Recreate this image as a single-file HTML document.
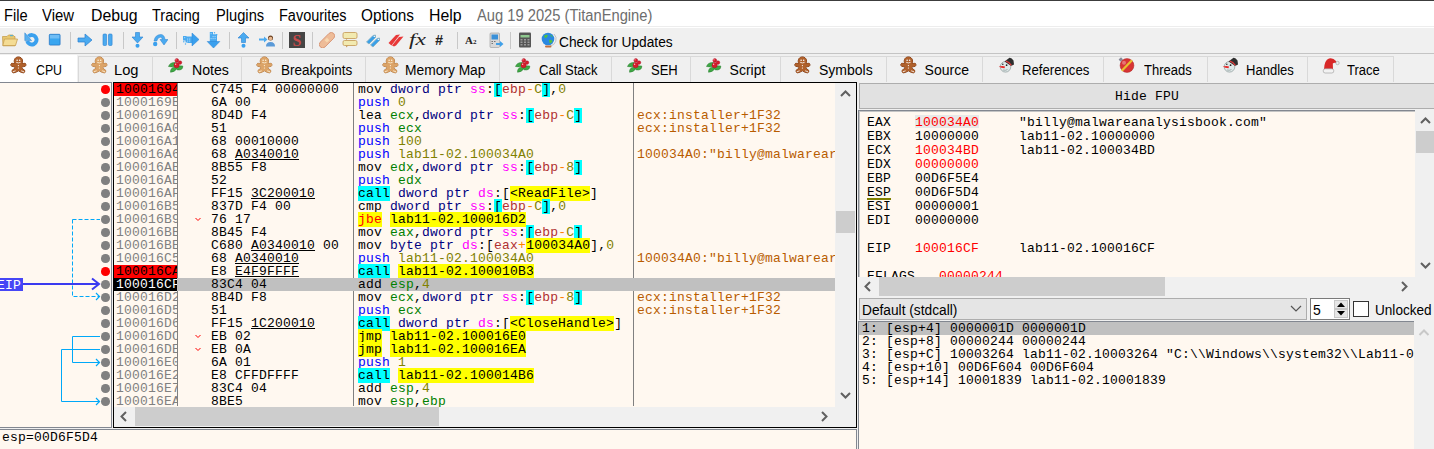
<!DOCTYPE html>
<html><head><meta charset="utf-8">
<style>
*{margin:0;padding:0;box-sizing:border-box}
html,body{width:1434px;height:449px;overflow:hidden;background:#f0f0f0;font-family:"Liberation Sans",sans-serif;position:relative}
.a{position:absolute}
.mi{position:absolute;top:6.5px;font-size:16px;line-height:18px;color:#000;white-space:nowrap}
.sep{position:absolute;top:32px;width:1px;height:17px;background:#c8c8c8}
.tt{font-size:14px;line-height:16px;color:#000;white-space:nowrap}
.m{font-family:"Liberation Mono",monospace;font-size:13px;letter-spacing:0.2px;white-space:pre;line-height:14px;color:#000}
.addr{position:absolute;left:114px;width:63px;height:13px;line-height:13px;padding-left:2px;color:#808080;overflow:hidden;font-family:"Liberation Mono",monospace;font-size:13px;letter-spacing:0.2px;white-space:pre}
.abp{background:#ff0000;color:#000}
.aeip{background:#000;color:#fff}
.rowsel{position:absolute;left:177px;width:658px;height:13px;background:#c0c0c0}
.dot{position:absolute;left:101px;width:8.5px;height:8.5px;border-radius:50%;background:#808080}
.dot.red{background:#ff0000}
.byt,.dis,.com{position:absolute;height:13px;line-height:13px;font-family:"Liberation Mono",monospace;font-size:13px;letter-spacing:0.2px;white-space:pre;color:#000}
.byt{left:211px}
.byt u{text-decoration:underline}
.dis{left:358px}
.com{left:637px;color:#b85c00;width:198px;overflow:hidden}
.jm{position:absolute;left:194px;height:13px;line-height:13px;font-size:11px;color:#ff0000}
.op{color:#ff8000}.mn{color:#000}.sz{color:#000080}.seg{color:#ff00ff}.br{background:#00ffff;color:#000}.reg{color:#b03030}.num{color:#808000}
.push{color:#0000ff}.reg2{color:#008000}.call{background:#00ffff;color:#000}.api{background:#ffff00;color:#000}
.jcc{background:#ffff00;color:#ff0000}.tgt{background:#ffff00;color:#000}.tgtn{background:#ffff00;color:#000}.jmp{background:#ffff00;color:#000}
.colsep{position:absolute;top:83px;width:1px;height:323px;background:#808080}
.chev{position:absolute}
</style></head><body>
<!-- menubar -->
<div class="a" style="left:0;top:0;width:1434px;height:28px;background:#fff;border-top:1px solid #3c3c3c"></div>
<span class="mi" style="left:4.0px;transform:scaleX(0.915);transform-origin:0 0">File</span>
<span class="mi" style="left:42.4px;transform:scaleX(0.93);transform-origin:0 0">View</span>
<span class="mi" style="left:90.9px;transform:scaleX(0.99);transform-origin:0 0">Debug</span>
<span class="mi" style="left:151.7px;transform:scaleX(0.905);transform-origin:0 0">Tracing</span>
<span class="mi" style="left:215.8px;transform:scaleX(0.917);transform-origin:0 0">Plugins</span>
<span class="mi" style="left:278.8px;transform:scaleX(0.905);transform-origin:0 0">Favourites</span>
<span class="mi" style="left:360.5px;transform:scaleX(0.96);transform-origin:0 0">Options</span>
<span class="mi" style="left:429.1px;transform:scaleX(0.99);transform-origin:0 0">Help</span>
<span class="mi" style="left:476.8px;transform:scaleX(0.92);transform-origin:0 0;color:#6d6d6d">Aug 19 2025 (TitanEngine)</span>
<div class="a" style="left:0;top:26px;width:1434px;height:1px;background:#ededed"></div>
<!-- toolbar -->
<div class="a" style="left:0;top:28px;width:1434px;height:26px;background:#f0f0f0;border-bottom:1px solid #c4c4c4"></div>
<svg class="a" style="left:2px;top:32px" width="16" height="16" viewBox="0 0 16 16"><path d="M0.5 4.5 L5 4.5 L6.5 3 L11 3 L12 4.5 L13 4.5 L13 13.8 L1 13.8Z" fill="#e8c870" stroke="#c8a050" stroke-width=".8"/><path d="M2.5 7 L15.5 7 L13.5 13.5 L0.8 13.5Z" fill="#f4dc94" stroke="#c8a050" stroke-width=".8"/><rect x="8" y="3" width="3" height="1.2" fill="#5ab0d0"/></svg>
<svg class="a" style="left:24px;top:32px" width="16" height="16" viewBox="0 0 16 16"><path d="M4.44 4.44 A4.75 4.75 0 1 1 3.2 9.0" fill="none" stroke="#3aa0ee" stroke-width="3.9"/><path d="M0.8 0.8 L0.8 8.6 L7.6 8.6Z" fill="#56b0f0" stroke="#2a80d0" stroke-width=".5"/></svg>
<svg class="a" style="left:47px;top:32px" width="16" height="16" viewBox="0 0 16 16"><rect x="2.3" y="2.3" width="10.8" height="10.8" rx=".8" fill="#3aa6f0" stroke="#2070c0" stroke-width=".7"/><rect x="3" y="3" width="9.4" height="3.5" fill="#86c8f6" opacity=".7"/></svg>
<svg class="a" style="left:77px;top:32px" width="16" height="16" viewBox="0 0 16 16"><path d="M1 6 L8 6 L8 2 L15 8 L8 14 L8 10 L1 10Z" fill="#4aaaf0" stroke="#2a80d0" stroke-width=".7"/></svg>
<svg class="a" style="left:100px;top:32px" width="16" height="16" viewBox="0 0 16 16"><rect x="3" y="2" width="3.6" height="11.5" rx="1" fill="#4aaaf0" stroke="#2a80d0" stroke-width=".6"/><rect x="8.5" y="2" width="3.6" height="11.5" rx="1" fill="#4aaaf0" stroke="#2a80d0" stroke-width=".6"/></svg>
<svg class="a" style="left:130px;top:32px" width="16" height="16" viewBox="0 0 16 16"><path d="M5.5 0.5 L9.5 0.5 L9.5 5 L13 5 L7.5 11 L2 5 L5.5 5Z" fill="#4aaaf0" stroke="#2a80d0" stroke-width=".6"/><circle cx="7.5" cy="13.8" r="2" fill="#3aa0ee"/></svg>
<svg class="a" style="left:152px;top:32px" width="16" height="16" viewBox="0 0 16 16"><path d="M2 9 Q3 2.5 9 2.5 Q12.5 2.8 13 7.5 L16 7.5 L12 13 L8 7.5 L10.3 7.5 Q10 5.2 8.5 5.2 Q5.5 5.3 4.8 9Z" fill="#4aaaf0" stroke="#2a80d0" stroke-width=".5"/><circle cx="3.2" cy="12" r="2.2" fill="#3aa0ee"/></svg>
<svg class="a" style="left:183px;top:32px" width="16" height="16" viewBox="0 0 16 16"><path d="M0 4 L3.5 4 L3.5 4.5 L9.5 4.5 L9.5 11 L4.5 11 L4.5 10.5 L2.5 10.5 L2.5 8.5 L0 8.5Z" fill="#4aaaf0"/><path d="M9 1 L16 7.5 L9 14Z" fill="#3aa0ee" stroke="#2a80d0" stroke-width=".5"/><g fill="#9ad0f8"><rect x="1" y="5" width="1.2" height="1.2"/><rect x="4" y="6.5" width="1.2" height="1.2"/><rect x="6" y="6.5" width="1.2" height="1.2"/><rect x="4" y="8.5" width="1.2" height="1.2"/><rect x="6" y="8.5" width="1.2" height="1.2"/></g><circle cx="0.8" cy="9.8" r=".7" fill="#4aaaf0"/><circle cx="2.5" cy="12" r=".7" fill="#4aaaf0"/></svg>
<svg class="a" style="left:206px;top:32px" width="16" height="16" viewBox="0 0 16 16"><path d="M3.8 0 L7 0 L7 2.2 L11 2.2 L11 10 L3.8 10Z" fill="#4aaaf0"/><path d="M1.2 9.5 L13.8 9.5 L7.5 16Z" fill="#3aa0ee" stroke="#2a80d0" stroke-width=".5"/><g fill="#9ad0f8"><rect x="4.5" y="1" width="1.2" height="1.2"/><rect x="6.5" y="4" width="1.2" height="1.2"/><rect x="8.5" y="4" width="1.2" height="1.2"/><rect x="4.5" y="6" width="1.2" height="1.2"/><rect x="6.5" y="6" width="1.2" height="1.2"/><rect x="8.5" y="6" width="1.2" height="1.2"/></g><circle cx="8.5" cy="0.8" r=".7" fill="#4aaaf0"/><circle cx="10.8" cy="2.8" r=".7" fill="#4aaaf0"/></svg>
<svg class="a" style="left:236px;top:32px" width="16" height="16" viewBox="0 0 16 16"><path d="M7.5 0.5 L13 6 L9.5 6 L9.5 10.5 L5.5 10.5 L5.5 6 L2 6Z" fill="#4aaaf0" stroke="#2a80d0" stroke-width=".6"/><circle cx="7.5" cy="13.8" r="2" fill="#3aa0ee"/></svg>
<svg class="a" style="left:259px;top:32px" width="16" height="16" viewBox="0 0 16 16"><path d="M0 6.5 L5 6.5 L5 4.5 L8.5 7.5 L5 10.5 L5 8.5 L0 8.5Z" fill="#4aaaf0"/><circle cx="11.5" cy="6" r="2.5" fill="#6a4020"/><circle cx="11.5" cy="6.5" r="1.8" fill="#e8b890"/><path d="M7 14.5 Q7 10 11.5 10 Q16 10 16 14.5Z" fill="#5a9ad8"/></svg>
<svg class="a" style="left:289px;top:32px" width="16" height="16" viewBox="0 0 16 16"><rect x="0" y="0" width="16" height="16" fill="#454545"/><text x="8" y="13.5" text-anchor="middle" font-family="Liberation Serif" font-weight="bold" font-size="16" fill="#c84a4a">S</text></svg>
<svg class="a" style="left:319px;top:32px" width="16" height="16" viewBox="0 0 16 16"><rect x="-1.5" y="4.8" width="19" height="6.8" rx="3.4" fill="#eebc98" stroke="#d49070" stroke-width=".8" transform="rotate(-45 8 8.2)"/><rect x="6.3" y="6.5" width="3.4" height="3.4" fill="#f8d8b0" transform="rotate(-45 8 8.2)"/></svg>
<svg class="a" style="left:342px;top:32px" width="16" height="16" viewBox="0 0 16 16"><rect x="1" y="0.5" width="14" height="6" rx="1.5" fill="#f2eab0" stroke="#c8a060" stroke-width=".9"/><path d="M4 6.5 L4 8 L6 6.5Z" fill="#c8a060"/><rect x="1" y="8.5" width="14" height="5" rx="1.5" fill="#f2eab0" stroke="#c8a060" stroke-width=".9"/><path d="M4 13.5 L4 15.5 L6.5 13.5Z" fill="#c8a060"/></svg>
<svg class="a" style="left:365px;top:32px" width="16" height="16" viewBox="0 0 16 16"><path d="M1.5 10 L8 3.5 L10.5 3 L10.5 5.5 L4 12Z" fill="#3aa0e8" stroke="#88b0c0" stroke-width=".8"/><path d="M5.5 13 L12 6.5 L14.5 6 L14.5 8.5 L8 15Z" fill="#3aa0e8" stroke="#88b0c0" stroke-width=".8"/><circle cx="9.3" cy="4.4" r=".7" fill="#fff"/><circle cx="13.3" cy="7.4" r=".7" fill="#fff"/></svg>
<svg class="a" style="left:388px;top:32px" width="16" height="16" viewBox="0 0 16 16"><path d="M0.5 11 L8 3 L12 2.5 L5 11.5 L3.5 13.5Z" fill="#e83838"/><path d="M4 13.5 L11 5 L15.5 4.5 L8 13.5 L6 14.5Z" fill="#e83838"/></svg>
<svg class="a" style="left:409px;top:31px" width="19" height="18" viewBox="0 0 19 18"><text x="0" y="13.5" font-family="Liberation Serif" font-style="italic" font-size="17" fill="#222" textLength="17" lengthAdjust="spacingAndGlyphs">fx</text></svg>
<svg class="a" style="left:435px;top:31px" width="16" height="16" viewBox="0 0 16 16"><text x="0" y="13.5" font-family="Liberation Sans" font-style="italic" font-weight="bold" font-size="14" fill="#222">#</text></svg>
<svg class="a" style="left:465px;top:32px" width="16" height="16" viewBox="0 0 16 16"><text x="0" y="12" font-family="Liberation Serif" font-weight="bold" font-size="11" fill="#222">A</text><text x="8" y="12" font-family="Liberation Serif" font-weight="bold" font-size="7" fill="#222">2</text></svg>
<svg class="a" style="left:489px;top:32px" width="16" height="16" viewBox="0 0 16 16"><rect x="1" y="1" width="9.5" height="14.5" rx="1" fill="#d8d8d8" stroke="#999" stroke-width=".6"/><rect x="2.5" y="2.5" width="6.5" height="5" fill="#3a90d8"/><g fill="#777"><rect x="2.5" y="9" width="1.5" height="1"/><rect x="5" y="9" width="1.5" height="1"/><rect x="2.5" y="11" width="1.5" height="1"/></g><path d="M7 11 L11 11 L11 9 L14.5 12 L11 15 L11 13 L7 13Z" fill="#40a0e8"/></svg>
<svg class="a" style="left:518px;top:32px" width="16" height="16" viewBox="0 0 16 16"><rect x="1" y="0.5" width="12" height="15" rx="1" fill="#555"/><rect x="2.5" y="3" width="9" height="2.5" fill="#8ec88e"/><g fill="#999"><rect x="2.5" y="7" width="2" height="1.5"/><rect x="6" y="7" width="2" height="1.5"/><rect x="9.5" y="7" width="2" height="1.5"/><rect x="2.5" y="9.5" width="2" height="1.5"/><rect x="6" y="9.5" width="2" height="1.5"/><rect x="9.5" y="9.5" width="2" height="1.5"/><rect x="2.5" y="12" width="2" height="1.5"/><rect x="6" y="12" width="2" height="1.5"/><rect x="9.5" y="12" width="2" height="1.5"/></g></svg>
<svg class="a" style="left:541px;top:32px" width="16" height="16" viewBox="0 0 16 16"><circle cx="7" cy="7" r="6.3" fill="#2a88e0"/><path d="M3 4 Q5 2 7 3.5 Q6 6 4 6Z M8 8 Q11 7 11.5 9.5 Q10 12 8.5 11Z M9 2.5 Q11 3 12 5 Q10 5 9 2.5Z" fill="#50c040"/><path d="M13 2 A7 7 0 0 1 9 14" fill="none" stroke="#bbb" stroke-width=".9"/><rect x="4" y="13.5" width="6.5" height="2" rx="1" fill="#c07040"/></svg>
<div class="sep" style="left:70px"></div>
<div class="sep" style="left:123px"></div>
<div class="sep" style="left:176px"></div>
<div class="sep" style="left:229px"></div>
<div class="sep" style="left:282px"></div>
<div class="sep" style="left:312px"></div>
<div class="sep" style="left:457px"></div>
<div class="sep" style="left:510px"></div>
<span class="a" style="left:559px;top:33.5px;font-size:14px;line-height:16px;color:#000;white-space:nowrap;transform:scaleX(0.98);transform-origin:0 0">Check for Updates</span>
<!-- tabs -->
<div class="a" style="left:0px;top:55px;width:77px;height:27px;background:#fff"></div>
<div class="a" style="left:8px;top:55px"><svg width="22" height="22" viewBox="0 0 22 22"><defs></defs><g fill="#b0612c" stroke="#7a3a18" stroke-width="1"><path d="M6.8 8.6 L3.8 8.3 Q2.6 8.7 2.9 10.3 Q3.3 11.6 5 11.6 L7 11.8 L6.8 13.4 L4.2 15.2 Q3.4 17.2 5.2 17.8 Q7 18.1 10.4 15.8 Q13.8 18.1 15.6 17.8 Q17.4 17.2 16.6 15.2 L14 13.4 L13.8 11.8 L15.8 11.6 Q17.5 11.6 17.9 10.3 Q18.2 8.7 17 8.3 L14 8.6 Z"/><circle cx="10.4" cy="6.1" r="4.2"/></g><g fill="#b0612c"><path d="M6.8 8.6 L3.8 8.3 Q2.6 8.7 2.9 10.3 Q3.3 11.6 5 11.6 L7 11.8 L6.8 13.4 L4.2 15.2 Q3.4 17.2 5.2 17.8 Q7 18.1 10.4 15.8 Q13.8 18.1 15.6 17.8 Q17.4 17.2 16.6 15.2 L14 13.4 L13.8 11.8 L15.8 11.6 Q17.5 11.6 17.9 10.3 Q18.2 8.7 17 8.3 L14 8.6 Z"/><circle cx="10.4" cy="6.1" r="4.2"/></g><g fill="#fff"><circle cx="9.1" cy="5.3" r=".75"/><circle cx="11.7" cy="5.3" r=".75"/><circle cx="10.4" cy="10.6" r=".6"/><circle cx="10.4" cy="13" r=".6"/></g><g stroke="#fff" stroke-width=".8" fill="none"><path d="M8.2 7.3 Q10.4 8.6 12.6 7.3"/><path d="M4.8 16.8 L7.6 15.8"/><path d="M16 16.8 L13.2 15.8"/></g></svg></div>
<span class="tt a" style="left:35.5px;top:61.5px;transform:scaleX(0.88);transform-origin:0 0">CPU</span>
<div class="a" style="left:78px;top:56px;width:75px;height:26px;background:#f0f0f0;border:1px solid #d9d9d9;border-bottom:none"></div>
<div class="a" style="left:88.5px;top:55px"><svg width="22" height="22" viewBox="0 0 22 22"><defs></defs><g fill="#dca468" stroke="#b07a48" stroke-width="1"><path d="M6.8 8.6 L3.8 8.3 Q2.6 8.7 2.9 10.3 Q3.3 11.6 5 11.6 L7 11.8 L6.8 13.4 L4.2 15.2 Q3.4 17.2 5.2 17.8 Q7 18.1 10.4 15.8 Q13.8 18.1 15.6 17.8 Q17.4 17.2 16.6 15.2 L14 13.4 L13.8 11.8 L15.8 11.6 Q17.5 11.6 17.9 10.3 Q18.2 8.7 17 8.3 L14 8.6 Z"/><circle cx="10.4" cy="6.1" r="4.2"/></g><g fill="#dca468"><path d="M6.8 8.6 L3.8 8.3 Q2.6 8.7 2.9 10.3 Q3.3 11.6 5 11.6 L7 11.8 L6.8 13.4 L4.2 15.2 Q3.4 17.2 5.2 17.8 Q7 18.1 10.4 15.8 Q13.8 18.1 15.6 17.8 Q17.4 17.2 16.6 15.2 L14 13.4 L13.8 11.8 L15.8 11.6 Q17.5 11.6 17.9 10.3 Q18.2 8.7 17 8.3 L14 8.6 Z"/><circle cx="10.4" cy="6.1" r="4.2"/></g><g fill="#fff6e0"><circle cx="9.1" cy="5.3" r=".75"/><circle cx="11.7" cy="5.3" r=".75"/><circle cx="10.4" cy="10.6" r=".6"/><circle cx="10.4" cy="13" r=".6"/></g><g stroke="#fff6e0" stroke-width=".8" fill="none"><path d="M8.2 7.3 Q10.4 8.6 12.6 7.3"/><path d="M4.8 16.8 L7.6 15.8"/><path d="M16 16.8 L13.2 15.8"/></g></svg></div>
<span class="tt a" style="left:114px;top:62px;transform:scaleX(1.05);transform-origin:0 0">Log</span>
<div class="a" style="left:152px;top:56px;width:90px;height:26px;background:#f0f0f0;border:1px solid #d9d9d9;border-bottom:none"></div>
<div class="a" style="left:165px;top:55px"><svg width="22" height="22" viewBox="0 0 22 22"><g fill="#3ea844" stroke="#267a2c" stroke-width=".5"><path d="M3.5 11.5 Q5 7.2 10.5 7.5 L11 10.5 Q8 12.8 3.5 11.5Z"/><path d="M5.5 17.2 Q5.2 12.5 10.5 12 L11.8 13.5 Q10 17.3 5.5 17.2Z"/><path d="M17.8 11 Q18 15.8 12 14.8 L11 13 Q12.5 10 17.8 11Z"/></g><g fill="#d81c2c" stroke="#a01020" stroke-width=".4"><circle cx="11.8" cy="5.4" r="1.9"/><circle cx="15" cy="7.6" r="1.8"/><circle cx="11.6" cy="10.2" r="2.6"/></g><g fill="#ffc0c0"><circle cx="11" cy="4.8" r=".6"/><circle cx="10.6" cy="9.3" r=".7"/></g></svg></div>
<span class="tt a" style="left:192px;top:62px;transform:scaleX(1.01);transform-origin:0 0">Notes</span>
<div class="a" style="left:241px;top:56px;width:125px;height:26px;background:#f0f0f0;border:1px solid #d9d9d9;border-bottom:none"></div>
<div class="a" style="left:253.8px;top:55px"><svg width="22" height="22" viewBox="0 0 22 22"><defs></defs><g fill="#dca468" stroke="#b07a48" stroke-width="1"><path d="M6.8 8.6 L3.8 8.3 Q2.6 8.7 2.9 10.3 Q3.3 11.6 5 11.6 L7 11.8 L6.8 13.4 L4.2 15.2 Q3.4 17.2 5.2 17.8 Q7 18.1 10.4 15.8 Q13.8 18.1 15.6 17.8 Q17.4 17.2 16.6 15.2 L14 13.4 L13.8 11.8 L15.8 11.6 Q17.5 11.6 17.9 10.3 Q18.2 8.7 17 8.3 L14 8.6 Z"/><circle cx="10.4" cy="6.1" r="4.2"/></g><g fill="#dca468"><path d="M6.8 8.6 L3.8 8.3 Q2.6 8.7 2.9 10.3 Q3.3 11.6 5 11.6 L7 11.8 L6.8 13.4 L4.2 15.2 Q3.4 17.2 5.2 17.8 Q7 18.1 10.4 15.8 Q13.8 18.1 15.6 17.8 Q17.4 17.2 16.6 15.2 L14 13.4 L13.8 11.8 L15.8 11.6 Q17.5 11.6 17.9 10.3 Q18.2 8.7 17 8.3 L14 8.6 Z"/><circle cx="10.4" cy="6.1" r="4.2"/></g><g fill="#fff6e0"><circle cx="9.1" cy="5.3" r=".75"/><circle cx="11.7" cy="5.3" r=".75"/><circle cx="10.4" cy="10.6" r=".6"/><circle cx="10.4" cy="13" r=".6"/></g><g stroke="#fff6e0" stroke-width=".8" fill="none"><path d="M8.2 7.3 Q10.4 8.6 12.6 7.3"/><path d="M4.8 16.8 L7.6 15.8"/><path d="M16 16.8 L13.2 15.8"/></g></svg></div>
<span class="tt a" style="left:281px;top:62px;transform:scaleX(0.965);transform-origin:0 0">Breakpoints</span>
<div class="a" style="left:365px;top:56px;width:135px;height:26px;background:#f0f0f0;border:1px solid #d9d9d9;border-bottom:none"></div>
<div class="a" style="left:379.5px;top:55px"><svg width="22" height="22" viewBox="0 0 22 22"><defs></defs><g fill="#dca468" stroke="#b07a48" stroke-width="1"><path d="M6.8 8.6 L3.8 8.3 Q2.6 8.7 2.9 10.3 Q3.3 11.6 5 11.6 L7 11.8 L6.8 13.4 L4.2 15.2 Q3.4 17.2 5.2 17.8 Q7 18.1 10.4 15.8 Q13.8 18.1 15.6 17.8 Q17.4 17.2 16.6 15.2 L14 13.4 L13.8 11.8 L15.8 11.6 Q17.5 11.6 17.9 10.3 Q18.2 8.7 17 8.3 L14 8.6 Z"/><circle cx="10.4" cy="6.1" r="4.2"/></g><g fill="#dca468"><path d="M6.8 8.6 L3.8 8.3 Q2.6 8.7 2.9 10.3 Q3.3 11.6 5 11.6 L7 11.8 L6.8 13.4 L4.2 15.2 Q3.4 17.2 5.2 17.8 Q7 18.1 10.4 15.8 Q13.8 18.1 15.6 17.8 Q17.4 17.2 16.6 15.2 L14 13.4 L13.8 11.8 L15.8 11.6 Q17.5 11.6 17.9 10.3 Q18.2 8.7 17 8.3 L14 8.6 Z"/><circle cx="10.4" cy="6.1" r="4.2"/></g><g fill="#fff6e0"><circle cx="9.1" cy="5.3" r=".75"/><circle cx="11.7" cy="5.3" r=".75"/><circle cx="10.4" cy="10.6" r=".6"/><circle cx="10.4" cy="13" r=".6"/></g><g stroke="#fff6e0" stroke-width=".8" fill="none"><path d="M8.2 7.3 Q10.4 8.6 12.6 7.3"/><path d="M4.8 16.8 L7.6 15.8"/><path d="M16 16.8 L13.2 15.8"/></g></svg></div>
<span class="tt a" style="left:405px;top:62px;transform:scaleX(0.985);transform-origin:0 0">Memory Map</span>
<div class="a" style="left:499px;top:56px;width:113px;height:26px;background:#f0f0f0;border:1px solid #d9d9d9;border-bottom:none"></div>
<div class="a" style="left:512.3px;top:55px"><svg width="22" height="22" viewBox="0 0 22 22"><g fill="#3ea844" stroke="#267a2c" stroke-width=".5"><path d="M3.5 11.5 Q5 7.2 10.5 7.5 L11 10.5 Q8 12.8 3.5 11.5Z"/><path d="M5.5 17.2 Q5.2 12.5 10.5 12 L11.8 13.5 Q10 17.3 5.5 17.2Z"/><path d="M17.8 11 Q18 15.8 12 14.8 L11 13 Q12.5 10 17.8 11Z"/></g><g fill="#d81c2c" stroke="#a01020" stroke-width=".4"><circle cx="11.8" cy="5.4" r="1.9"/><circle cx="15" cy="7.6" r="1.8"/><circle cx="11.6" cy="10.2" r="2.6"/></g><g fill="#ffc0c0"><circle cx="11" cy="4.8" r=".6"/><circle cx="10.6" cy="9.3" r=".7"/></g></svg></div>
<span class="tt a" style="left:539px;top:62px;transform:scaleX(0.93);transform-origin:0 0">Call Stack</span>
<div class="a" style="left:611px;top:56px;width:80px;height:26px;background:#f0f0f0;border:1px solid #d9d9d9;border-bottom:none"></div>
<div class="a" style="left:624.1px;top:55px"><svg width="22" height="22" viewBox="0 0 22 22"><g fill="#3ea844" stroke="#267a2c" stroke-width=".5"><path d="M3.5 11.5 Q5 7.2 10.5 7.5 L11 10.5 Q8 12.8 3.5 11.5Z"/><path d="M5.5 17.2 Q5.2 12.5 10.5 12 L11.8 13.5 Q10 17.3 5.5 17.2Z"/><path d="M17.8 11 Q18 15.8 12 14.8 L11 13 Q12.5 10 17.8 11Z"/></g><g fill="#d81c2c" stroke="#a01020" stroke-width=".4"><circle cx="11.8" cy="5.4" r="1.9"/><circle cx="15" cy="7.6" r="1.8"/><circle cx="11.6" cy="10.2" r="2.6"/></g><g fill="#ffc0c0"><circle cx="11" cy="4.8" r=".6"/><circle cx="10.6" cy="9.3" r=".7"/></g></svg></div>
<span class="tt a" style="left:651px;top:62px;transform:scaleX(0.93);transform-origin:0 0">SEH</span>
<div class="a" style="left:690px;top:56px;width:91px;height:26px;background:#f0f0f0;border:1px solid #d9d9d9;border-bottom:none"></div>
<div class="a" style="left:702.5px;top:55px"><svg width="22" height="22" viewBox="0 0 22 22"><g fill="#3ea844" stroke="#267a2c" stroke-width=".5"><path d="M3.5 11.5 Q5 7.2 10.5 7.5 L11 10.5 Q8 12.8 3.5 11.5Z"/><path d="M5.5 17.2 Q5.2 12.5 10.5 12 L11.8 13.5 Q10 17.3 5.5 17.2Z"/><path d="M17.8 11 Q18 15.8 12 14.8 L11 13 Q12.5 10 17.8 11Z"/></g><g fill="#d81c2c" stroke="#a01020" stroke-width=".4"><circle cx="11.8" cy="5.4" r="1.9"/><circle cx="15" cy="7.6" r="1.8"/><circle cx="11.6" cy="10.2" r="2.6"/></g><g fill="#ffc0c0"><circle cx="11" cy="4.8" r=".6"/><circle cx="10.6" cy="9.3" r=".7"/></g></svg></div>
<span class="tt a" style="left:729.6px;top:62px;transform:scaleX(1.0);transform-origin:0 0">Script</span>
<div class="a" style="left:780px;top:56px;width:107px;height:26px;background:#f0f0f0;border:1px solid #d9d9d9;border-bottom:none"></div>
<div class="a" style="left:792.3px;top:55px"><svg width="22" height="22" viewBox="0 0 22 22"><defs></defs><g fill="#b0612c" stroke="#7a3a18" stroke-width="1"><path d="M6.8 8.6 L3.8 8.3 Q2.6 8.7 2.9 10.3 Q3.3 11.6 5 11.6 L7 11.8 L6.8 13.4 L4.2 15.2 Q3.4 17.2 5.2 17.8 Q7 18.1 10.4 15.8 Q13.8 18.1 15.6 17.8 Q17.4 17.2 16.6 15.2 L14 13.4 L13.8 11.8 L15.8 11.6 Q17.5 11.6 17.9 10.3 Q18.2 8.7 17 8.3 L14 8.6 Z"/><circle cx="10.4" cy="6.1" r="4.2"/></g><g fill="#b0612c"><path d="M6.8 8.6 L3.8 8.3 Q2.6 8.7 2.9 10.3 Q3.3 11.6 5 11.6 L7 11.8 L6.8 13.4 L4.2 15.2 Q3.4 17.2 5.2 17.8 Q7 18.1 10.4 15.8 Q13.8 18.1 15.6 17.8 Q17.4 17.2 16.6 15.2 L14 13.4 L13.8 11.8 L15.8 11.6 Q17.5 11.6 17.9 10.3 Q18.2 8.7 17 8.3 L14 8.6 Z"/><circle cx="10.4" cy="6.1" r="4.2"/></g><g fill="#fff"><circle cx="9.1" cy="5.3" r=".75"/><circle cx="11.7" cy="5.3" r=".75"/><circle cx="10.4" cy="10.6" r=".6"/><circle cx="10.4" cy="13" r=".6"/></g><g stroke="#fff" stroke-width=".8" fill="none"><path d="M8.2 7.3 Q10.4 8.6 12.6 7.3"/><path d="M4.8 16.8 L7.6 15.8"/><path d="M16 16.8 L13.2 15.8"/></g></svg></div>
<span class="tt a" style="left:819px;top:62px;transform:scaleX(1.0);transform-origin:0 0">Symbols</span>
<div class="a" style="left:886px;top:56px;width:97px;height:26px;background:#f0f0f0;border:1px solid #d9d9d9;border-bottom:none"></div>
<div class="a" style="left:897.8px;top:55px"><svg width="22" height="22" viewBox="0 0 22 22"><defs></defs><g fill="#b0612c" stroke="#7a3a18" stroke-width="1"><path d="M6.8 8.6 L3.8 8.3 Q2.6 8.7 2.9 10.3 Q3.3 11.6 5 11.6 L7 11.8 L6.8 13.4 L4.2 15.2 Q3.4 17.2 5.2 17.8 Q7 18.1 10.4 15.8 Q13.8 18.1 15.6 17.8 Q17.4 17.2 16.6 15.2 L14 13.4 L13.8 11.8 L15.8 11.6 Q17.5 11.6 17.9 10.3 Q18.2 8.7 17 8.3 L14 8.6 Z"/><circle cx="10.4" cy="6.1" r="4.2"/></g><g fill="#b0612c"><path d="M6.8 8.6 L3.8 8.3 Q2.6 8.7 2.9 10.3 Q3.3 11.6 5 11.6 L7 11.8 L6.8 13.4 L4.2 15.2 Q3.4 17.2 5.2 17.8 Q7 18.1 10.4 15.8 Q13.8 18.1 15.6 17.8 Q17.4 17.2 16.6 15.2 L14 13.4 L13.8 11.8 L15.8 11.6 Q17.5 11.6 17.9 10.3 Q18.2 8.7 17 8.3 L14 8.6 Z"/><circle cx="10.4" cy="6.1" r="4.2"/></g><g fill="#fff"><circle cx="9.1" cy="5.3" r=".75"/><circle cx="11.7" cy="5.3" r=".75"/><circle cx="10.4" cy="10.6" r=".6"/><circle cx="10.4" cy="13" r=".6"/></g><g stroke="#fff" stroke-width=".8" fill="none"><path d="M8.2 7.3 Q10.4 8.6 12.6 7.3"/><path d="M4.8 16.8 L7.6 15.8"/><path d="M16 16.8 L13.2 15.8"/></g></svg></div>
<span class="tt a" style="left:924.6px;top:62px;transform:scaleX(1.0);transform-origin:0 0">Source</span>
<div class="a" style="left:982px;top:56px;width:122px;height:26px;background:#f0f0f0;border:1px solid #d9d9d9;border-bottom:none"></div>
<div class="a" style="left:995.3px;top:55px"><svg width="22" height="22" viewBox="0 0 22 22"><circle cx="10.5" cy="11.8" r="5.3" fill="#dfe8e8" stroke="#7a8a8a" stroke-width=".6"/><path d="M9.5 6.5 L14.5 2.8 Q16.5 2.5 18.5 5.5 L19 9.5 Q17 11 15.5 10.5Z" fill="#2e2e2e"/><path d="M10.8 6.2 Q14 7 16.3 10.3" stroke="#e03a3a" stroke-width="1.3" fill="none"/><circle cx="7.8" cy="9.2" r=".75" fill="#222"/><circle cx="11.6" cy="10.2" r=".85" fill="#222"/><path d="M3.8 11.5 Q8 10.6 10 11.5 L9.5 13.3 Q6 12.9 3.8 11.5Z" fill="#e82828"/><path d="M8 15 Q10.5 15.8 12.5 14.5" stroke="#7a8a8a" stroke-width=".6" fill="none"/></svg></div>
<span class="tt a" style="left:1022px;top:62px;transform:scaleX(0.94);transform-origin:0 0">References</span>
<div class="a" style="left:1103px;top:56px;width:105px;height:26px;background:#f0f0f0;border:1px solid #d9d9d9;border-bottom:none"></div>
<div class="a" style="left:1115px;top:55px"><svg width="22" height="22" viewBox="0 0 22 22"><rect x="4.2" y="3" width="3.2" height="3" fill="#8a8a9a" transform="rotate(-40 5.8 4.5)"/><circle cx="12" cy="10.5" r="6.9" fill="#d83434" stroke="#a82020" stroke-width=".5"/><path d="M6.8 15.8 L17 5.2" stroke="#e8c030" stroke-width="2.2"/><circle cx="9" cy="7.8" r="2" fill="#f09090" opacity=".7"/></svg></div>
<span class="tt a" style="left:1143.5px;top:62px;transform:scaleX(0.93);transform-origin:0 0">Threads</span>
<div class="a" style="left:1207px;top:56px;width:101px;height:26px;background:#f0f0f0;border:1px solid #d9d9d9;border-bottom:none"></div>
<div class="a" style="left:1219.3px;top:55px"><svg width="22" height="22" viewBox="0 0 22 22"><circle cx="10.5" cy="11.8" r="5.3" fill="#dfe8e8" stroke="#7a8a8a" stroke-width=".6"/><path d="M9.5 6.5 L14.5 2.8 Q16.5 2.5 18.5 5.5 L19 9.5 Q17 11 15.5 10.5Z" fill="#2e2e2e"/><path d="M10.8 6.2 Q14 7 16.3 10.3" stroke="#e03a3a" stroke-width="1.3" fill="none"/><circle cx="7.8" cy="9.2" r=".75" fill="#222"/><circle cx="11.6" cy="10.2" r=".85" fill="#222"/><path d="M3.8 11.5 Q8 10.6 10 11.5 L9.5 13.3 Q6 12.9 3.8 11.5Z" fill="#e82828"/><path d="M8 15 Q10.5 15.8 12.5 14.5" stroke="#7a8a8a" stroke-width=".6" fill="none"/></svg></div>
<span class="tt a" style="left:1246px;top:62px;transform:scaleX(0.93);transform-origin:0 0">Handles</span>
<div class="a" style="left:1307px;top:56px;width:87px;height:26px;background:#f0f0f0;border:1px solid #d9d9d9;border-bottom:none"></div>
<div class="a" style="left:1318px;top:55px"><svg width="22" height="22" viewBox="0 0 22 22"><path d="M6 14.5 Q6.3 5 11 3.5 Q15 2.5 18 6 L18.5 8 Q16.2 7.2 14.8 8.5 L15 14.5Z" fill="#d82828"/><rect x="5.2" y="13.8" width="10.6" height="4.2" rx="2" fill="#f2f2f2" stroke="#999" stroke-width=".6"/><circle cx="19.5" cy="8" r="1.7" fill="#eee" stroke="#999" stroke-width=".6"/></svg></div>
<span class="tt a" style="left:1347px;top:62px;transform:scaleX(0.93);transform-origin:0 0">Trace</span>
<!-- left: gutter + disasm -->
<div class="a" style="left:0;top:82px;width:112px;height:346px;background:#fff8f0;border-right:1px solid #828790;border-bottom:1px solid #828790;border-top:1px solid #828790"></div>
<div class="a" style="left:113px;top:82px;width:744px;height:346px;background:#fff8f0;border:1px solid #000"></div>
<div class="colsep" style="left:177px"></div>
<div class="colsep" style="left:353px"></div>
<div class="colsep" style="left:633px"></div>
<div class="a" style="left:0;top:83px;width:857px;height:324px;overflow:hidden">
<div class="a" style="left:0;top:-83px;width:857px;height:449px">

<div class="addr abp" style="top:83px">10001694</div>
<div class="dot red" style="top:85.1px"></div>
<div class="byt" style="top:83px">C745 F4 00000000</div>
<div class="dis" style="top:83px"><span class="mn">mov</span> <span class="sz">dword ptr</span> <span class="seg">ss</span>:<span class="br">[</span><span class="reg">ebp</span><span class="op">-</span><span class="num">C</span><span class="br">]</span>,<span class="num">0</span></div>

<div class="addr" style="top:96px">1000169B</div>
<div class="dot" style="top:98.1px"></div>
<div class="byt" style="top:96px">6A 00</div>
<div class="dis" style="top:96px"><span class="push">push</span> <span class="num">0</span></div>

<div class="addr" style="top:109px">1000169D</div>
<div class="dot" style="top:111.1px"></div>
<div class="byt" style="top:109px">8D4D F4</div>
<div class="dis" style="top:109px"><span class="mn">lea</span> <span class="reg2">ecx</span>,<span class="sz">dword ptr</span> <span class="seg">ss</span>:<span class="br">[</span><span class="reg">ebp</span><span class="op">-</span><span class="num">C</span><span class="br">]</span></div>
<div class="com" style="top:109px">ecx:installer+1F32</div>

<div class="addr" style="top:122px">100016A0</div>
<div class="dot" style="top:124.1px"></div>
<div class="byt" style="top:122px">51</div>
<div class="dis" style="top:122px"><span class="push">push</span> <span class="reg2">ecx</span></div>
<div class="com" style="top:122px">ecx:installer+1F32</div>

<div class="addr" style="top:135px">100016A1</div>
<div class="dot" style="top:137.1px"></div>
<div class="byt" style="top:135px">68 00010000</div>
<div class="dis" style="top:135px"><span class="push">push</span> <span class="num">100</span></div>

<div class="addr" style="top:148px">100016A6</div>
<div class="dot" style="top:150.1px"></div>
<div class="byt" style="top:148px">68 <u>A0340010</u></div>
<div class="dis" style="top:148px"><span class="push">push</span> <span class="num">lab11-02.100034A0</span></div>
<div class="com" style="top:148px">100034A0:"billy@malwarear</div>

<div class="addr" style="top:161px">100016AB</div>
<div class="dot" style="top:163.1px"></div>
<div class="byt" style="top:161px">8B55 F8</div>
<div class="dis" style="top:161px"><span class="mn">mov</span> <span class="reg2">edx</span>,<span class="sz">dword ptr</span> <span class="seg">ss</span>:<span class="br">[</span><span class="reg">ebp</span><span class="op">-</span><span class="num">8</span><span class="br">]</span></div>

<div class="addr" style="top:174px">100016AE</div>
<div class="dot" style="top:176.1px"></div>
<div class="byt" style="top:174px">52</div>
<div class="dis" style="top:174px"><span class="push">push</span> <span class="reg2">edx</span></div>

<div class="addr" style="top:187px">100016AF</div>
<div class="dot" style="top:189.1px"></div>
<div class="byt" style="top:187px">FF15 <u>3C200010</u></div>
<div class="dis" style="top:187px"><span class="call">call</span> <span class="sz">dword ptr</span> <span class="seg">ds</span>:[<span class="api">&lt;ReadFile&gt;</span>]</div>

<div class="addr" style="top:200px">100016B5</div>
<div class="dot" style="top:202.1px"></div>
<div class="byt" style="top:200px">837D F4 00</div>
<div class="dis" style="top:200px"><span class="mn">cmp</span> <span class="sz">dword ptr</span> <span class="seg">ss</span>:<span class="br">[</span><span class="reg">ebp</span><span class="op">-</span><span class="num">C</span><span class="br">]</span>,<span class="num">0</span></div>

<div class="addr" style="top:213px">100016B9</div>
<div class="dot" style="top:215.1px"></div>
<svg class="a" style="left:194px;top:213px" width="8" height="13"><path d="M1.5 5 L4 7.5 L6.5 5" stroke="#ff0000" stroke-width="1" fill="none"/></svg>
<div class="byt" style="top:213px">76 17</div>
<div class="dis" style="top:213px"><span class="jcc">jbe</span> <span class="tgt">lab11-02.100016D2</span></div>

<div class="addr" style="top:226px">100016BB</div>
<div class="dot" style="top:228.1px"></div>
<div class="byt" style="top:226px">8B45 F4</div>
<div class="dis" style="top:226px"><span class="mn">mov</span> <span class="reg2">eax</span>,<span class="sz">dword ptr</span> <span class="seg">ss</span>:<span class="br">[</span><span class="reg">ebp</span><span class="op">-</span><span class="num">C</span><span class="br">]</span></div>

<div class="addr" style="top:239px">100016BE</div>
<div class="dot" style="top:241.1px"></div>
<div class="byt" style="top:239px">C680 <u>A0340010</u> 00</div>
<div class="dis" style="top:239px"><span class="mn">mov</span> <span class="sz">byte ptr</span> <span class="seg">ds</span>:[<span class="reg">eax</span><span class="op">+</span><span class="tgtn">100034A0</span>],<span class="num">0</span></div>

<div class="addr" style="top:252px">100016C5</div>
<div class="dot" style="top:254.1px"></div>
<div class="byt" style="top:252px">68 <u>A0340010</u></div>
<div class="dis" style="top:252px"><span class="push">push</span> <span class="num">lab11-02.100034A0</span></div>
<div class="com" style="top:252px">100034A0:"billy@malwarear</div>

<div class="addr abp" style="top:265px">100016CA</div>
<div class="dot red" style="top:267.1px"></div>
<div class="byt" style="top:265px">E8 <u>E4F9FFFF</u></div>
<div class="dis" style="top:265px"><span class="call">call</span> <span class="tgt">lab11-02.100010B3</span></div>
<div class="rowsel" style="top:278px"></div>
<div class="addr aeip" style="top:278px">100016CF</div>
<div class="dot" style="top:280.1px"></div>
<div class="byt" style="top:278px">83C4 04</div>
<div class="dis" style="top:278px"><span class="mn">add</span> <span class="reg2">esp</span>,<span class="num">4</span></div>

<div class="addr" style="top:291px">100016D2</div>
<div class="dot" style="top:293.1px"></div>
<div class="byt" style="top:291px">8B4D F8</div>
<div class="dis" style="top:291px"><span class="mn">mov</span> <span class="reg2">ecx</span>,<span class="sz">dword ptr</span> <span class="seg">ss</span>:<span class="br">[</span><span class="reg">ebp</span><span class="op">-</span><span class="num">8</span><span class="br">]</span></div>
<div class="com" style="top:291px">ecx:installer+1F32</div>

<div class="addr" style="top:304px">100016D5</div>
<div class="dot" style="top:306.1px"></div>
<div class="byt" style="top:304px">51</div>
<div class="dis" style="top:304px"><span class="push">push</span> <span class="reg2">ecx</span></div>
<div class="com" style="top:304px">ecx:installer+1F32</div>

<div class="addr" style="top:317px">100016D6</div>
<div class="dot" style="top:319.1px"></div>
<div class="byt" style="top:317px">FF15 <u>1C200010</u></div>
<div class="dis" style="top:317px"><span class="call">call</span> <span class="sz">dword ptr</span> <span class="seg">ds</span>:[<span class="api">&lt;CloseHandle&gt;</span>]</div>

<div class="addr" style="top:330px">100016DC</div>
<div class="dot" style="top:332.1px"></div>
<svg class="a" style="left:194px;top:330px" width="8" height="13"><path d="M1.5 5 L4 7.5 L6.5 5" stroke="#ff0000" stroke-width="1" fill="none"/></svg>
<div class="byt" style="top:330px">EB 02</div>
<div class="dis" style="top:330px"><span class="jmp">jmp</span> <span class="tgt">lab11-02.100016E0</span></div>

<div class="addr" style="top:343px">100016DE</div>
<div class="dot" style="top:345.1px"></div>
<svg class="a" style="left:194px;top:343px" width="8" height="13"><path d="M1.5 5 L4 7.5 L6.5 5" stroke="#ff0000" stroke-width="1" fill="none"/></svg>
<div class="byt" style="top:343px">EB 0A</div>
<div class="dis" style="top:343px"><span class="jmp">jmp</span> <span class="tgt">lab11-02.100016EA</span></div>

<div class="addr" style="top:356px">100016E0</div>
<div class="dot" style="top:358.1px"></div>
<div class="byt" style="top:356px">6A 01</div>
<div class="dis" style="top:356px"><span class="push">push</span> <span class="num">1</span></div>

<div class="addr" style="top:369px">100016E2</div>
<div class="dot" style="top:371.1px"></div>
<div class="byt" style="top:369px">E8 CFFDFFFF</div>
<div class="dis" style="top:369px"><span class="call">call</span> <span class="tgt">lab11-02.100014B6</span></div>

<div class="addr" style="top:382px">100016E7</div>
<div class="dot" style="top:384.1px"></div>
<div class="byt" style="top:382px">83C4 04</div>
<div class="dis" style="top:382px"><span class="mn">add</span> <span class="reg2">esp</span>,<span class="num">4</span></div>

<div class="addr" style="top:395px">100016EA</div>
<div class="dot" style="top:397.1px"></div>
<div class="byt" style="top:395px">8BE5</div>
<div class="dis" style="top:395px"><span class="mn">mov</span> <span class="reg2">esp</span>,<span class="reg2">ebp</span></div>
</div></div>
<!-- jump arrows -->
<svg class="a" style="left:0;top:83px" width="112" height="324" viewBox="0 0 112 324">
 <g stroke="#00a8f8" fill="none" stroke-width="1">
  <path d="M72.5 136.5 H100" stroke-dasharray="4,2"/>
  <path d="M72.5 136.5 V213.5 H99" stroke-dasharray="4,2"/>
  <path d="M100 253.5 H72.5 V279.5 H99"/>
  <path d="M100 266.5 H61.5 V318.5 H99"/>
 </g>
 <g stroke="#00a8f8" fill="none" stroke-width="1.2">
  <path d="M96 210 L99.5 213.5 L96 217"/>
  <path d="M96 276 L99.5 279.5 L96 283"/>
  <path d="M96 315 L99.5 318.5 L96 322"/>
 </g>
 <rect x="0" y="195" width="23" height="13" fill="#4646f6"/>
 <path d="M23 201 H99" stroke="#3a3af0" stroke-width="2"/>
 <path d="M92 195.5 L99 201 L92 206.5" stroke="#3a3af0" stroke-width="2" fill="none"/>
</svg>
<span class="m a" style="left:-3px;top:278.5px;color:#fff;line-height:13px">EIP</span>
<!-- disasm scrollbars -->
<div class="a" style="left:835px;top:83px;width:21px;height:344px;background:#f0f0f0"></div>
<div class="a" style="left:836px;top:211px;width:19px;height:22px;background:#cdcdcd"></div>
<div class="a" style="left:114px;top:407px;width:722px;height:20px;background:#f0f0f0"></div>
<div class="a" style="left:135px;top:407px;width:304px;height:19px;background:#cdcdcd"></div>
<svg class="a" style="left:114px;top:83px" width="742" height="344">
 <g stroke="#606060" stroke-width="2" fill="none">
  <path d="M727 13 L731.5 8.5 L736 13"/>
  <path d="M727 310 L731.5 314.5 L736 310"/>
  <path d="M12 329 L7.5 333.5 L12 338"/>
  <path d="M708 329 L712.5 333.5 L708 338"/>
 </g>
</svg>
<!-- status -->
<div class="a" style="left:0;top:429px;width:857px;height:20px;background:#fff8f0;border-top:1px solid #828790;border-right:1px solid #828790"></div>
<span class="m a" style="left:2px;top:431px">esp=00D6F5D4</span>
<!-- right side -->
<div class="a" style="left:859px;top:83px;width:580px;height:26px;background:#e1e1e1;border:1px solid #adadad"></div>
<span class="m a" style="left:1115px;top:90px">Hide FPU</span>
<div class="a" style="left:858px;top:110px;width:558px;height:167px;background:#fff8f0;border-left:1px solid #828790;border-top:1px solid #828790;box-shadow:inset 1px 1px 0 #c4c4c4"></div>
<div class="a" style="left:858px;top:110px;width:557px;height:167px;overflow:hidden">
<div class="a" style="left:-858px;top:-110px;width:1434px;height:449px">
<div class="a" style="left:915px;top:115px;width:64px;height:13px;background:#e8e8e8"></div>
<div class="m a" style="left:867px;top:116px">EAX</div>
<div class="m a" style="left:915px;top:116px;color:#ff0000">100034A0</div>
<div class="m a" style="left:1019px;top:116px">"billy@malwareanalysisbook.com"</div>
<div class="m a" style="left:867px;top:130px">EBX</div>
<div class="m a" style="left:915px;top:130px;color:#000">10000000</div>
<div class="m a" style="left:1019px;top:130px">lab11-02.10000000</div>
<div class="m a" style="left:867px;top:144px">ECX</div>
<div class="m a" style="left:915px;top:144px;color:#ff0000">100034BD</div>
<div class="m a" style="left:1019px;top:144px">lab11-02.100034BD</div>
<div class="m a" style="left:867px;top:158px">EDX</div>
<div class="m a" style="left:915px;top:158px;color:#ff0000">00000000</div>
<div class="m a" style="left:867px;top:172px">EBP</div>
<div class="m a" style="left:915px;top:172px;color:#000">00D6F5E4</div>
<div class="m a" style="left:867px;top:186px">ESP</div>
<div class="a" style="left:867px;top:198px;width:24px;height:2px;background:#808000"></div>
<div class="m a" style="left:915px;top:186px;color:#000">00D6F5D4</div>
<div class="m a" style="left:867px;top:200px">ESI</div>
<div class="m a" style="left:915px;top:200px;color:#000">00000001</div>
<div class="m a" style="left:867px;top:214px">EDI</div>
<div class="m a" style="left:915px;top:214px;color:#000">00000000</div>
<div class="m a" style="left:867px;top:242px">EIP</div>
<div class="m a" style="left:915px;top:242px;color:#ff0000">100016CF</div>
<div class="m a" style="left:1019px;top:242px">lab11-02.100016CF</div>
<div class="m a" style="left:867px;top:270px">EFLAGS</div><div class="m a" style="left:939px;top:270px;color:#ff0000">00000244</div>
</div></div>
<div class="a" style="left:1415px;top:110px;width:19px;height:185px;background:#f0f0f0"></div>
<div class="a" style="left:1416px;top:131px;width:18px;height:22px;background:#cdcdcd"></div>
<div class="a" style="left:859px;top:277px;width:556px;height:19px;background:#f0f0f0"></div>
<div class="a" style="left:879px;top:277px;width:286px;height:19px;background:#cdcdcd"></div>
<svg class="a" style="left:858px;top:110px" width="576" height="190">
 <g stroke="#606060" stroke-width="2" fill="none">
  <path d="M563 13 L567.5 8.5 L572 13"/>
  <path d="M563 153 L567.5 157.5 L572 153"/>
  <path d="M12 172 L7.5 176.5 L12 181"/>
  <path d="M544 172 L548.5 176.5 L544 181"/>
 </g>
</svg>
<!-- calling convention row -->
<div class="a" style="left:859px;top:298px;width:448px;height:22px;background:#e5e5e5;border:1px solid #adadad"></div>
<span class="a" style="left:862px;top:302px;font-size:14px;line-height:16px;white-space:nowrap;transform:scaleX(0.98);transform-origin:0 0">Default (stdcall)</span>
<svg class="a" style="left:1290px;top:304px" width="12" height="10"><path d="M1 2 L6 7 L11 2" stroke="#555" stroke-width="1.2" fill="none"/></svg>
<div class="a" style="left:1310px;top:298px;width:40px;height:22px;background:#fff;border:1px solid #7a7a7a"></div>
<span class="a" style="left:1313px;top:302px;font-size:14px;line-height:16px">5</span>
<div class="a" style="left:1334px;top:300px;width:14px;height:9px;background:#e6e6e6;border:1px solid #c8c8c8"></div>
<div class="a" style="left:1334px;top:309px;width:14px;height:9px;background:#e6e6e6;border:1px solid #c8c8c8"></div>
<svg class="a" style="left:1334px;top:300px" width="14" height="18"><path d="M3 7 L7 2.5 L11 7Z M3 11 L7 15.5 L11 11Z" fill="#000"/></svg>
<div class="a" style="left:1353px;top:301px;width:16px;height:16px;background:#fff;border:1px solid #333"></div>
<span class="a" style="left:1375px;top:302px;font-size:14px;line-height:16px;white-space:nowrap;transform:scaleX(0.97);transform-origin:0 0">Unlocked</span>
<!-- stack args -->
<div class="a" style="left:858px;top:321px;width:557px;height:128px;background:#fff8f0;border-left:1px solid #828790;border-top:1px solid #828790"></div>
<div class="a" style="left:858px;top:321px;width:556px;height:128px;overflow:hidden">
<div class="a" style="left:-858px;top:-321px;width:1434px;height:449px">
<div class="a" style="left:859px;top:322px;width:555px;height:13px;background:#c0c0c0"></div>
<div class="m a" style="left:862px;top:322px;width:552px;overflow:hidden">1: [esp+4] 0000001D 0000001D</div>
<div class="m a" style="left:862px;top:335px;width:552px;overflow:hidden">2: [esp+8] 00000244 00000244</div>
<div class="m a" style="left:862px;top:348px;width:552px;overflow:hidden">3: [esp+C] 10003264 lab11-02.10003264 "C:\\Windows\\system32\\Lab11-02.ini"</div>
<div class="m a" style="left:862px;top:361px;width:552px;overflow:hidden">4: [esp+10] 00D6F604 00D6F604</div>
<div class="m a" style="left:862px;top:374px;width:552px;overflow:hidden">5: [esp+14] 10001839 lab11-02.10001839</div>
</div></div>
<div class="a" style="left:1414px;top:321px;width:20px;height:128px;background:#f0f0f0"></div>
<svg class="a" style="left:1414px;top:321px" width="20" height="20"><path d="M5.5 14 L10 9.5 L14.5 14" stroke="#c8c8c8" stroke-width="2" fill="none"/></svg>
</body></html>
